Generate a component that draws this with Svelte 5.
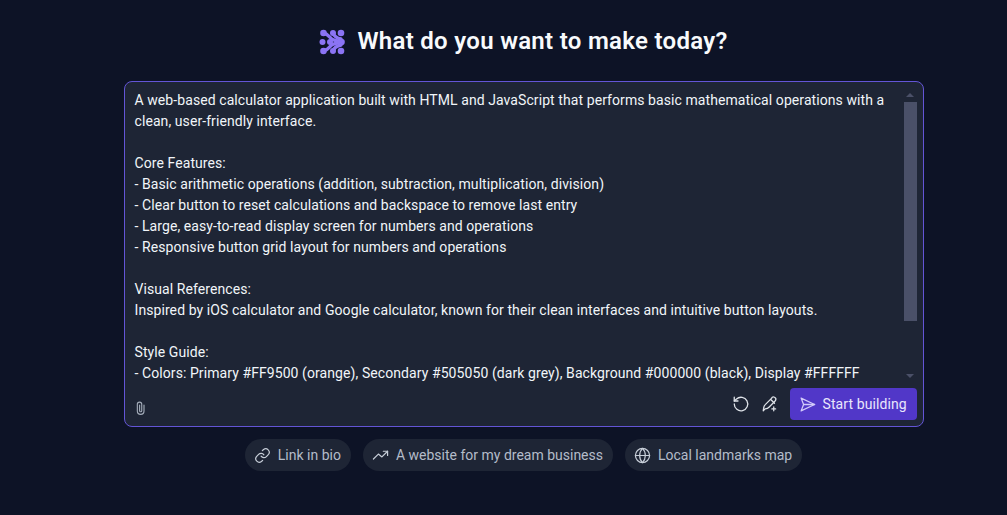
<script>
  const lines = [
    'A web-based calculator application built with HTML and JavaScript that performs basic mathematical operations with a',
    'clean, user-friendly interface.',
    '',
    'Core Features:',
    '- Basic arithmetic operations (addition, subtraction, multiplication, division)',
    '- Clear button to reset calculations and backspace to remove last entry',
    '- Large, easy-to-read display screen for numbers and operations',
    '- Responsive button grid layout for numbers and operations',
    '',
    'Visual References:',
    'Inspired by iOS calculator and Google calculator, known for their clean interfaces and intuitive button layouts.',
    '',
    'Style Guide:',
    '- Colors: Primary #FF9500 (orange), Secondary #505050 (dark grey), Background #000000 (black), Display #FFFFFF'
  ];
</script>

<main class="page">
  <h1 class="title">
    <svg class="logo" width="26" height="26" viewBox="0 0 26 26" aria-hidden="true">
      <g fill="#8b74f4">
        <circle cx="4.500" cy="4" r="3.300"/><circle cx="14" cy="4" r="3"/><circle cx="22" cy="4" r="3.300"/>
        <circle cx="3.500" cy="13" r="3"/><circle cx="22.500" cy="13" r="3.300"/>
        <circle cx="4.500" cy="22" r="3.300"/><circle cx="14" cy="22" r="3"/><circle cx="22" cy="22" r="3.300"/>
        <circle cx="11" cy="13" r="3"/>
      </g>
      <g fill="none" stroke="#8b74f4" stroke-width="3.400" stroke-linecap="round">
        <path d="M4.500 4c5 1 6 5 9 6.500 3 1.500 5 1.500 9 2.500-4 1-6 1-9 2.500-3 1.500-4 5.500-9 6.500"/>
        <path d="M14 4c1 3 3 5 8 6"/><path d="M14 22c1-3 3-5 8-6"/>
      </g>
    </svg>
    What do you want to make today?
  </h1>

  <section class="card">
    <div class="editor">
      <div class="text">
        {#each lines as line}
          <div class="line">{line}</div>
        {/each}
      </div>
      <div class="scroll">
        <span class="arrow up"></span>
        <span class="thumb"></span>
        <span class="arrow down"></span>
      </div>
    </div>
    <div class="footer">
      <svg class="clip" width="16" height="16" viewBox="0 0 24 24" fill="none" stroke="#a3acb9" stroke-width="1.7" stroke-linecap="round">
        <path d="M16.5 7.5v9a5 5 0 0 1-10 0V6.5a3.3 3.3 0 0 1 6.6 0v9.5a1.6 1.6 0 0 1-3.2 0V7.5"/>
      </svg>
      <div class="actions">
        <svg width="18" height="18" viewBox="0 0 24 24" fill="none" stroke="#dfe3e9" stroke-width="1.7" stroke-linecap="round" stroke-linejoin="round">
          <path d="M3 12a9 9 0 1 0 3-6.7L3 8"/><path d="M3 3v5h5"/>
        </svg>
        <svg width="18" height="18" viewBox="0 0 24 24" fill="none" stroke="#dfe3e9" stroke-width="1.7" stroke-linecap="round" stroke-linejoin="round">
          <path d="M14 4.500a3 3 0 0 1 5.500 2.500c-.2.600-.6 1-1 1.400L11 16c-1.500 1.500-3.500 2.300-5.500 2.500L3 21l.5-3.500c.2-2 1-3.700 2.500-5z"/>
          <path d="M13 6l5 5"/><path d="M17 16v5M14.500 18.500h5"/>
        </svg>
        <button class="build">
          <svg width="17" height="17" viewBox="0 0 24 24" fill="none" stroke="#d2cafa" stroke-width="1.800" stroke-linecap="round" stroke-linejoin="round">
            <path d="M3 3l19 9-19 9 3.500-9z"/><path d="M6.500 12H22"/>
          </svg>
          Start building
        </button>
      </div>
    </div>
  </section>

  <nav class="chips">
    <button class="chip">
      <svg width="17" height="17" viewBox="0 0 24 24" fill="none" stroke="#c7ced8" stroke-width="1.700" stroke-linecap="round" stroke-linejoin="round">
        <path d="M10 13a5 5 0 0 0 7.500.5l3-3a5 5 0 0 0-7-7l-1.700 1.700"/>
        <path d="M14 11a5 5 0 0 0-7.500-.5l-3 3a5 5 0 0 0 7 7l1.700-1.700"/>
      </svg>
      Link in bio
    </button>
    <button class="chip">
      <svg width="17" height="17" viewBox="0 0 24 24" fill="none" stroke="#c7ced8" stroke-width="1.700" stroke-linecap="round" stroke-linejoin="round">
        <path d="M2 17l7-7 5 4 8-8"/><path d="M16 6h6v6"/>
      </svg>
      A website for my dream business
    </button>
    <button class="chip">
      <svg width="17" height="17" viewBox="0 0 24 24" fill="none" stroke="#c7ced8" stroke-width="1.700" stroke-linecap="round" stroke-linejoin="round">
        <circle cx="12" cy="12" r="10"/><path d="M2 12h20"/><path d="M12 2c3 3 4 6.500 4 10s-1 7-4 10c-3-3-4-6.500-4-10s1-7 4-10z"/>
      </svg>
      Local landmarks map
    </button>
  </nav>
</main>

<style>
  :global(body) {
    margin: 0;
    background: #0d1326;
  }
  .page {
    height: 515px;
    box-sizing: border-box;
    padding: 25px 0 0 40px;
    display: flex;
    flex-direction: column;
    align-items: center;
    font-family: Roboto, sans-serif;
    overflow: hidden;
  }
  .title {
    margin: 0 0 23px;
    height: 33px;
    display: flex;
    align-items: center;
    gap: 12px;
    font-size: 24px;
    line-height: 33px;
    font-weight: 600;
    letter-spacing: 0.3px;
    color: #f8fafc;
  }
  .card {
    box-sizing: border-box;
    width: 800px;
    height: 346px;
    flex: none;
    border: 1px solid #6355d6;
    border-radius: 8px;
    background: #1e2535;
    display: flex;
    flex-direction: column;
  }
  .editor {
    display: flex;
    height: 300px;
    flex: none;
    overflow: hidden;
    padding: 8px 6px 0 10px;
    box-sizing: border-box;
  }
  .text {
    flex: 1;
    min-width: 0;
    font-size: 14px;
    line-height: 21px;
    letter-spacing: 0.08px;
    color: #f1f5f9;
  }
  .line {
    min-height: 21px;
    white-space: nowrap;
  }
  .scroll {
    width: 13px;
    height: 292px;
    flex: none;
    display: flex;
    flex-direction: column;
    align-items: center;
  }
  .thumb {
    width: 13px;
    height: 219px;
    flex: none;
    margin-top: 5px;
    background: #4a5068;
  }
  .arrow {
    width: 0;
    height: 0;
    flex: none;
    border-left: 4px solid transparent;
    border-right: 4px solid transparent;
  }
  .up {
    margin-top: 3px;
    border-bottom: 4px solid #4a5068;
  }
  .down {
    margin-top: 53px;
    border-top: 4px solid #4a5068;
  }
  .footer {
    flex: 1;
    display: flex;
    align-items: flex-start;
    justify-content: space-between;
    padding: 6px 6px 0 8px;
  }
  .clip {
    margin-top: 12px;
  }
  .actions {
    display: flex;
    align-items: center;
    gap: 11px;
  }
  .build {
    display: flex;
    align-items: center;
    gap: 7px;
    height: 32px;
    width: 127px;
    box-sizing: border-box;
    padding: 0 9px;
    border: 0;
    border-radius: 4px;
    background: #5137c8;
    color: #e9e6fc;
    font: 400 14px/1 Roboto, sans-serif;
    letter-spacing: 0.1px;
    white-space: nowrap;
  }
  .chips {
    margin-top: 12px;
    display: flex;
    gap: 12px;
  }
  .chip {
    display: flex;
    align-items: center;
    gap: 7px;
    height: 32px;
    padding: 0 10px 0 9px;
    border: 0;
    border-radius: 16px;
    background: #1e2535;
    color: #b4bcc9;
    font: 400 14px/1 Roboto, sans-serif;
    white-space: nowrap;
  }
</style>
